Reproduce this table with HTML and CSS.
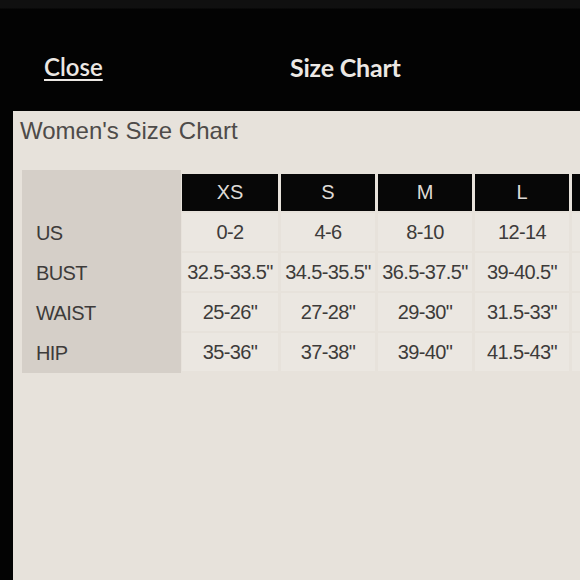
FILE: index.html
```html
<!DOCTYPE html>
<html>
<head>
<meta charset="utf-8">
<link rel="stylesheet" href="styles.css">
</head>
<body>
<div class="screen">
  <header class="topbar">
    <a class="close" href="#">Close</a>
    <h1 class="title">Size Chart</h1>
  </header>
  <main class="panel">
    <h2 class="chart-title">Women's Size Chart</h2>
    <div class="chart">
      <div class="labels">
        <div class="label">US</div>
        <div class="label">BUST</div>
        <div class="label">WAIST</div>
        <div class="label">HIP</div>
      </div>
      <div class="grid">
        <div class="head">XS</div>
        <div class="head">S</div>
        <div class="head">M</div>
        <div class="head">L</div>
        <div class="head"></div>

        <div class="cell">0-2</div>
        <div class="cell">4-6</div>
        <div class="cell">8-10</div>
        <div class="cell">12-14</div>
        <div class="cell"></div>

        <div class="cell">32.5-33.5"</div>
        <div class="cell">34.5-35.5"</div>
        <div class="cell">36.5-37.5"</div>
        <div class="cell">39-40.5"</div>
        <div class="cell"></div>

        <div class="cell">25-26"</div>
        <div class="cell">27-28"</div>
        <div class="cell">29-30"</div>
        <div class="cell">31.5-33"</div>
        <div class="cell"></div>

        <div class="cell">35-36"</div>
        <div class="cell">37-38"</div>
        <div class="cell">39-40"</div>
        <div class="cell">41.5-43"</div>
        <div class="cell"></div>
      </div>
    </div>
  </main>
</div>
</body>
</html>
```

FILE: styles.css
```css
html, body {
  margin: 0;
  padding: 0;
  background: #040404;
  width: 580px;
  height: 580px;
  overflow: hidden;
}

.screen {
  display: flex;
  flex-direction: column;
  width: 580px;
  height: 580px;
  background: linear-gradient(#101010 0, #101010 8px, #030303 9px);
}

.topbar {
  height: 111px;
  flex: none;
  display: flex;
  align-items: flex-start;
  padding: 52px 0 0 44px;
  box-sizing: border-box;
  font-family: Lato, "Open Sans", sans-serif;
}

.close {
  color: #ece8e4;
  font-size: 24px;
  font-weight: 600;
  text-decoration: underline;
  text-decoration-thickness: 2px;
  text-underline-offset: 3px;
  width: 246px;
}

.title {
  margin: 0;
  color: #ece8e4;
  font-size: 25px;
  font-weight: 700;
  line-height: 1.2;
  letter-spacing: -0.2px;
}

.panel {
  flex: 1;
  margin-left: 13px;
  background: #e7e2db;
  padding: 7px 0 0 7px;
  overflow: hidden;
}

.chart-title {
  margin: 0;
  font-family: "Liberation Sans", Arial, sans-serif;
  font-weight: 400;
  font-size: 24px;
  line-height: 26px;
  color: #4e4b49;
}

.chart {
  display: flex;
  margin: 26px 0 0 2px;
  font-family: "Liberation Sans", Arial, sans-serif;
  font-size: 20px;
  letter-spacing: -0.6px;
  color: #3d3b3a;
}

.labels {
  flex: none;
  width: 159px;
  height: 203px;
  background: #d5cfc8;
  padding-top: 43px;
  box-sizing: border-box;
  margin-right: 1px;
}

.label {
  height: 40px;
  display: flex;
  align-items: center;
  padding-left: 14px;
}

.grid {
  display: grid;
  grid-template-columns: 96px repeat(4, 94px);
  grid-template-rows: 37px repeat(4, 38px);
  column-gap: 3px;
  row-gap: 2px;
  padding-top: 4px;
}

.head {
  background: #070707;
  color: #dedad6;
  display: flex;
  align-items: center;
  justify-content: center;
  letter-spacing: 0;
}

.cell {
  background: #ebe7e1;
  display: flex;
  align-items: center;
  justify-content: center;
  white-space: nowrap;
}
```
